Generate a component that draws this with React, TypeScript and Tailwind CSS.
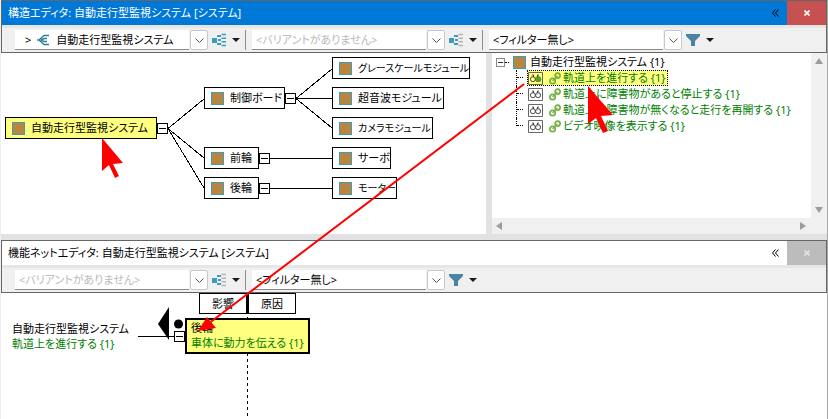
import type { ReactNode } from "react";

function HierarchyIcon({ off = false }: { off?: boolean }) {
  return (
    <svg width="15" height="14" viewBox="0 0 15 14" className="shrink-0" fill="none" strokeWidth="2" aria-hidden="true">
      <path d="M0 5h5v5H0z" fill="#3d9bbd" />
      <path d="M5 3h4M5 11h4M6 7h3" stroke="#3d9bbd" />
      <path d="M9.500 1.500H14M9.500 5.200H14M9.500 8.800H14M9.500 12.500H14" stroke={off ? "#b4b4b4" : "#3d9bbd"} strokeWidth="1.6" />
    </svg>
  );
}

function StructureIcon() {
  return (
    <svg width="13" height="12" viewBox="0 0 13 12" className="shrink-0" fill="none" stroke="#2f7f96" strokeWidth="1.4" aria-hidden="true">
      <path d="M0 6h3.500M2.500 5.500L7 1.500h5M2.500 6.500L7 10.500h5M4 6l3-1.500h3M4 6l3 1.500h3" />
    </svg>
  );
}

function Caret() {
  return (
    <svg width="8" height="4" viewBox="0 0 8 4" className="shrink-0" aria-hidden="true">
      <path d="M0 0h8L4 4z" fill="#1a1a1a" />
    </svg>
  );
}

function MenuButton({ label, children }: { label: string; children: ReactNode }) {
  return (
    <button type="button" aria-label={label} className="ml-1 flex h-5 w-7 shrink-0 items-center justify-between">
      {children}
      <Caret />
    </button>
  );
}

function Divider() {
  return <span className="ml-[5px] mr-1.5 h-5 w-px shrink-0 bg-[#8c8c8c]" />;
}

function Combo({ label, value, muted = false, icon }: { label: string; value: string; muted?: boolean; icon?: ReactNode }) {
  return (
    <div className="flex h-5 shrink-0 gap-px">
      <div className="flex w-[174px] items-center border-b border-[#8a8a8a] bg-white pl-1">
        {icon}
        <select
          aria-label={label}
          className={`h-4 min-w-0 flex-1 appearance-none bg-transparent outline-none ${muted ? "text-[#b9b9b9]" : "text-black"}`}
        >
          <option>{value}</option>
        </select>
      </div>
      <button type="button" aria-label={`${label}を開く`} className="flex w-[18px] items-center justify-center rounded-xs border border-[#c8c8c8] bg-white">
        <svg width="9" height="5" viewBox="0 0 9 5" fill="none" stroke="#555" aria-hidden="true">
          <path d="M.5.5l4 4 4-4" />
        </svg>
      </button>
    </div>
  );
}

function FilterMenu() {
  return (
    <MenuButton label="フィルターメニュー">
      <svg width="14" height="12" viewBox="0 0 14 12" aria-hidden="true">
        <path d="M0 0h14v2L9 7v5H5V7L0 2z" fill="#4b84a3" />
      </svg>
    </MenuButton>
  );
}

function Header({ title, active = false, children }: { title: string; active?: boolean; children: ReactNode }) {
  return (
    <header className="border border-[#666] bg-[#f0f0f0]">
      <div className={`flex h-6 items-center pl-1.5 ${active ? "bg-[#0078d7] text-white" : "bg-white text-black"}`}>
        <h2 className="flex-1">{title}</h2>
        <button type="button" aria-label="折りたたむ" className="mr-1.5 p-0.5 text-black">
          <svg width="7" height="8" viewBox="0 0 7 8" fill="none" stroke="currentColor" aria-hidden="true">
            <path d="M3.500.5L.5 4l3 3.500M6.500.5l-3 3.500 3 3.500" />
          </svg>
        </button>
        <button type="button" aria-label="閉じる" className={`flex h-6 w-[39px] items-center justify-center ${active ? "bg-[#c75050]" : "bg-[#bcbcbc]"}`}>
          <svg width="6" height="6" viewBox="0 0 6 6" fill="none" stroke={active ? "#fff" : "#e4e4e4"} strokeWidth="1.6" aria-hidden="true">
            <path d="M.5.5l5 5M5.500.5l-5 5" />
          </svg>
        </button>
      </div>
      <div className="flex h-[27px] items-center border-t-3 border-[#e6e6e6] pl-[13px]">{children}</div>
    </header>
  );
}

function Block() {
  return <span className="size-[13px] shrink-0 border border-[#3d9bbd] bg-[#b9853f]" />;
}

const nodes = [
  { name: "自動走行型監視システム", place: "left-1 top-16 w-[152px] bg-[#ffff80]" },
  { name: "制御ボード", place: "left-[203px] top-[34px] w-[81px] bg-white" },
  { name: "前輪", place: "left-[203px] top-[94px] w-[55px] bg-white" },
  { name: "後輪", place: "left-[203px] top-[124px] w-[55px] bg-white" },
  { name: "グレースケールモジュール", place: "left-[331px] top-1 w-[138px] bg-white text-[10px]" },
  { name: "超音波モジュール", place: "left-[331px] top-[34px] w-28 bg-white" },
  { name: "カメラモジュール", place: "left-[331px] top-16 w-[101px] bg-white text-[10px]" },
  { name: "サーボ", place: "left-[331px] top-[94px] w-[59px] bg-white" },
  { name: "モーター", place: "left-[331px] top-[124px] w-[65px] bg-white text-[10px]" },
];

const toggles = ["left-[156px] top-[70px]", "left-[284px] top-10", "left-[258px] top-[100px]", "left-[258px] top-[130px]"];

function Toggle({ place }: { place: string }) {
  return (
    <button type="button" aria-label="折りたたむ" className={`absolute flex size-[11px] items-center justify-center border border-black bg-white ${place}`}>
      <span className="h-px w-[7px] bg-black" />
    </button>
  );
}

function StructureCanvas() {
  return (
    <div className="relative h-[181px] min-w-0 overflow-hidden bg-white">
      <svg width="485" height="181" className="absolute left-0 top-0" stroke="#000" shapeRendering="crispEdges" aria-hidden="true">
        <path d="M167 75.500L203 46M167 75.500L203 105M167 75.500L203 135M295 45.500L331 16M295 45.500h36M295 45.500L331 75M269 105.500h62M269 135.500h62" fill="none" />
      </svg>
      {nodes.map((n) => (
        <div key={n.name} className={`absolute flex h-[22px] items-center gap-1.5 whitespace-nowrap border border-black pl-1.5 ${n.place}`}>
          <Block />
          {n.name}
        </div>
      ))}
      {toggles.map((t) => (
        <Toggle key={t} place={t} />
      ))}
    </div>
  );
}

function FunctionIcon({ linked }: { linked: boolean }) {
  return (
    <svg width="15" height="13" viewBox="0 0 15 13" className="shrink-0" fill="none" aria-hidden="true">
      <path d="M.5.5h14v12H.5z" fill="#fff" fillOpacity={linked ? 0 : 1} stroke="#666" />
      <g stroke="#333" strokeWidth=".9">
        <path d="M4 3h1.500v2M11 3H9.500v2" />
        <circle cx="4.900" cy="7.200" r="2.500" />
        <circle cx="10.100" cy="7.200" r="2.500" />
      </g>
      {linked && <circle cx="10.500" cy="7.200" r="2.800" fill="#55a51c" />}
    </svg>
  );
}

function ChainIcon() {
  return (
    <svg width="12" height="13" viewBox="0 0 12 13" className="shrink-0" fill="none" stroke="#76b041" strokeWidth="1.700" aria-hidden="true">
      <circle cx="3.600" cy="9" r="2.700" />
      <circle cx="8.600" cy="3.600" r="2.500" />
      <path d="M3.600 9l5-5.400" strokeWidth="1.200" />
    </svg>
  );
}

const functions = [
  "軌道上を進行する {1}",
  "軌道上に障害物があると停止する {1}",
  "軌道上に障害物が無くなると走行を再開する {1}",
  "ビデオ映像を表示する {1}",
];

function FunctionTree() {
  return (
    <div className="h-[165px] overflow-hidden bg-white pl-1 pt-px">
      <div className="flex h-4 items-center whitespace-nowrap">
        <button type="button" aria-label="折りたたむ" className="flex size-[9px] items-center justify-center border border-[#888]">
          <span className="h-px w-[5px] bg-[#333]" />
        </button>
        <span className="mr-1 w-1 border-t border-dotted border-black" />
        <Block />
        <span className="ml-1">自動走行型監視システム {"{1}"}</span>
      </div>
      <ul className="ml-5">
        {functions.map((f, i) => (
          <li key={f} className="flex h-4 whitespace-nowrap text-[#008000]">
            <span className={`w-px shrink-0 border-l border-dotted border-black ${i === functions.length - 1 ? "h-2" : "h-4"}`} />
            <span className="h-2 w-1.5 shrink-0 border-b border-dotted border-black" />
            <span className={`ml-1 flex h-4 shrink-0 items-center border border-dotted pr-0.5 ${i === 0 ? "border-black bg-[#ffff80]" : "border-transparent"}`}>
              <FunctionIcon linked={i === 0} />
              <span className="ml-1.5 mr-0.5 flex shrink-0">
                <ChainIcon />
              </span>
              {f}
            </span>
          </li>
        ))}
      </ul>
    </div>
  );
}

function ScrollArrow({ label, d }: { label: string; d: string }) {
  return (
    <button type="button" aria-label={label} className="flex size-4 items-center justify-center">
      <svg width="8" height="8" viewBox="0 0 8 8" fill="#9c9c9c" aria-hidden="true">
        <path d={d} />
      </svg>
    </button>
  );
}

function StructureEditor() {
  return (
    <section>
      <Header title="構造エディタ: 自動走行型監視システム [システム]" active>
        <Combo
          label="構造"
          value="自動走行型監視システム"
          icon={
            <span className="mx-1.5 flex items-center gap-1.5">
              &gt;
              <StructureIcon />
            </span>
          }
        />
        <MenuButton label="構造の表示">
          <HierarchyIcon />
        </MenuButton>
        <Divider />
        <Combo label="バリアント" value="<バリアントがありません>" muted />
        <MenuButton label="バリアントの表示">
          <HierarchyIcon off />
        </MenuButton>
        <Divider />
        <Combo label="フィルター" value="<フィルター無し>" />
        <FilterMenu />
      </Header>
      <div className="grid grid-cols-[485fr_335fr] gap-1.5 bg-[#e2e2e2] pb-1.5">
        <StructureCanvas />
        <div className="flex min-w-0 bg-[#f0f0f0]">
          <div className="min-w-0 flex-1">
            <FunctionTree />
            <div className="flex justify-between">
              <ScrollArrow label="左へ" d="M6 0v8L0 4z" />
              <ScrollArrow label="右へ" d="M1 0v8l6-4z" />
            </div>
          </div>
          <div className="flex w-4 flex-col justify-between pb-4">
            <ScrollArrow label="上へ" d="M0 7h8L4 1z" />
            <ScrollArrow label="下へ" d="M0 1h8L4 7z" />
          </div>
        </div>
      </div>
    </section>
  );
}

function FunctionNetCanvas() {
  return (
    <div className="relative min-h-[126px] flex-1 overflow-hidden bg-white">
      <div className="absolute left-[198px] top-0 flex h-[21px] w-[97px]">
        <span className="flex flex-1 items-center justify-center border border-black bg-white">影響</span>
        <span className="flex flex-1 items-center justify-center border border-l-2 border-black bg-white">原因</span>
      </div>
      <svg width="310" height="126" className="absolute left-0 top-0" aria-hidden="true">
        <path d="M246.500 24v101" stroke="#000" strokeDasharray="3 3" />
        <path d="M137 43.500h37" stroke="#000" />
        <path d="M157 31l11-17v33z" />
        <circle cx="177.500" cy="31" r="4.500" />
      </svg>
      <div className="absolute left-[11px] top-7 whitespace-nowrap leading-[15px]">
        <p>自動走行型監視システム</p>
        <p className="text-[#008000]">軌道上を進行する {"{1}"}</p>
      </div>
      <Toggle place="left-[173px] top-[38px]" />
      <div className="absolute left-[184px] top-[25px] h-9 w-[125px] whitespace-nowrap border-2 border-black bg-[#ffff80] pl-1 leading-[15px]">
        <p>後輪</p>
        <p className="text-[#008000]">車体に動力を伝える {"{1}"}</p>
      </div>
    </div>
  );
}

function FunctionNetEditor() {
  return (
    <section className="flex flex-1 flex-col">
      <Header title="機能ネットエディタ: 自動走行型監視システム [システム]">
        <Combo label="ネットのバリアント" value="<バリアントがありません>" muted />
        <MenuButton label="ネットの表示">
          <HierarchyIcon off />
        </MenuButton>
        <Divider />
        <Combo label="ネットのフィルター" value="<フィルター無し>" />
        <FilterMenu />
      </Header>
      <FunctionNetCanvas />
    </section>
  );
}

// Red pointers and the arrow that ties the function to its cause.
function Annotations() {
  return (
    <svg width="827" height="419" className="pointer-events-none absolute -left-px top-0" fill="#f00" aria-hidden="true">
      <path d="M524 84L208 324" stroke="#f00" strokeWidth="2" />
      <path d="M198 331l9-14 9 11z" />
      <path d="M102 138v33l7-6 6 13 4-2-6-12 10-1z" />
      <path d="M588 86v38l8-6 7 15 5-2-7-15 12-1z" />
    </svg>
  );
}

export default function App() {
  return (
    <main className="relative flex min-h-screen flex-col overflow-hidden border-x border-l-[#efefef] border-r-[#a8a8a8] bg-white font-['Noto_Sans','Noto_Sans_CJK_JP',sans-serif] text-[11px] leading-4 text-black [font-feature-settings:'palt']">
      <StructureEditor />
      <FunctionNetEditor />
      <Annotations />
    </main>
  );
}
